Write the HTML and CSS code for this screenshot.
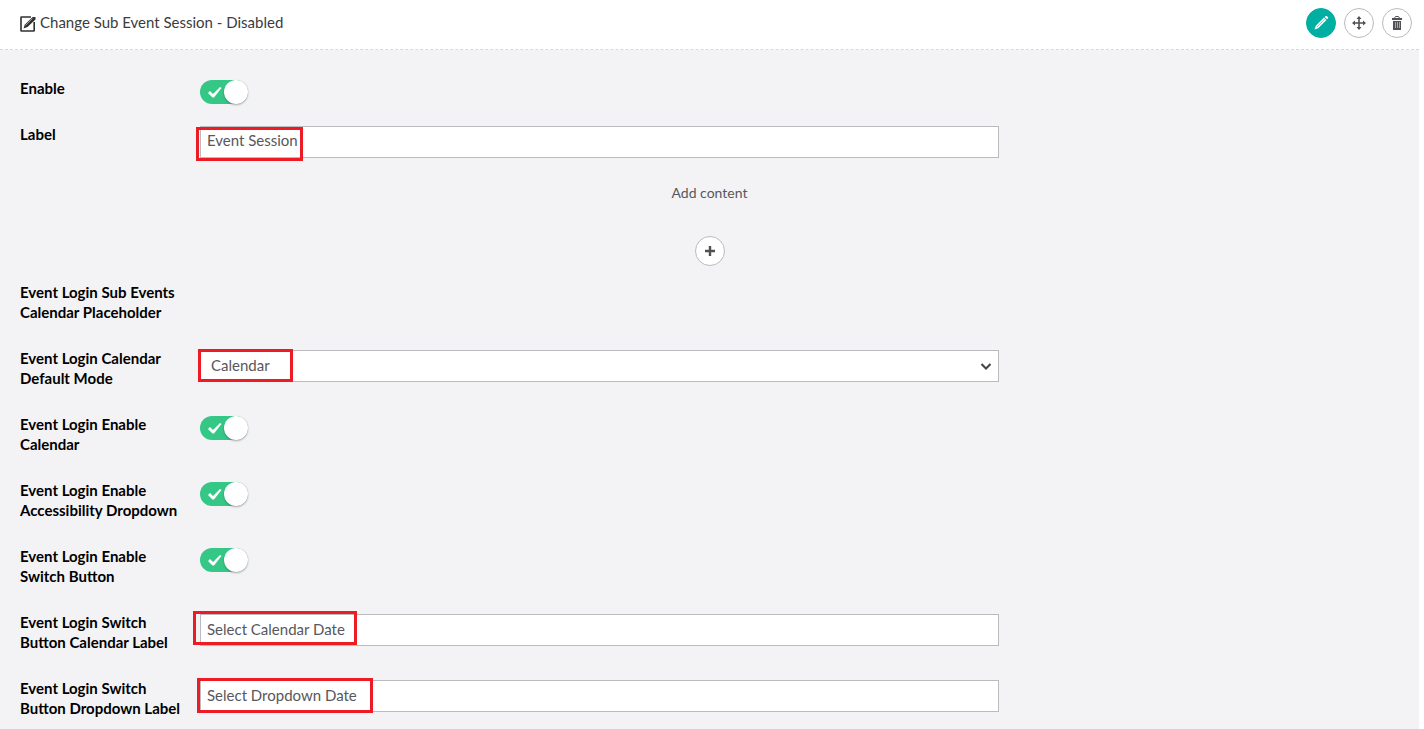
FILE: index.html
```
<!DOCTYPE html>
<html lang="en">
  <head>
    <meta charset="utf-8">
    <title>Change Sub Event Session</title>
    <link rel="stylesheet" href="styles.css">
  </head>
  <body>

    <div class="header">
      <svg class="icon-edit" width="16" height="16" viewBox="0 0 16 16">
        <path d="M11 1H1.500Q1 1 1 1.500V14.500Q1 15 1.500 15H13.500Q14.200 15 14.200 14.500V6" fill="none" stroke="#303033" stroke-width="1.600"/>
        <path d="M3.500 12.500l1.200-3.700L12.700 1h2.800v2.500L7.500 11z" fill="#303033"/>
        <path d="M5.500 9.500l7-7" stroke="#fff" stroke-width="0.500"/>
      </svg>
      <h1>Change Sub Event Session - Disabled</h1>
      <div class="actions">
        <button class="round active" type="button" aria-label="Edit">
          <svg width="16" height="16" viewBox="0 0 16 16">
            <path d="M1.500 14.500l1.300-3.800L11 2.600l2.400 2.400L5.200 13.200zM11.700 2l1-.9q.6-.4 1.100 0l1.200 1.200q.4.500 0 1l-.9 1z" fill="#fff"/>
            <path d="M4 12l7.800-7.800" stroke="#00aea2" stroke-width="0.500"/>
          </svg>
        </button>
        <button class="round" type="button" aria-label="Move">
          <svg width="14" height="14" viewBox="0 0 14 14" fill="#515054">
            <path d="M6.200 2.500h1.600v3.700h3.700v1.600H7.800v3.700H6.200V7.800H2.500V6.200h3.700z"/>
            <path d="M7 0l2.500 3h-5zM7 14l2.500-3h-5zM0 7l3-2.500v5zM14 7l-3-2.500v5z"/>
          </svg>
        </button>
        <button class="round" type="button" aria-label="Delete">
          <svg width="14" height="14" viewBox="0 0 14 14">
            <path d="M2 2h10v2H2zM3 5h8v9H3z" fill="#515054"/>
            <path d="M4.500 2l1-1.500h3l1 1.500" fill="none" stroke="#515054"/>
            <path d="M5.500 6v6M7.500 6v6M9.500 6v6" stroke="#7fb0e4"/>
          </svg>
        </button>
      </div>
    </div>

    <form class="content">
      <div class="row">
        <label for="enable">Enable</label>
        <div class="field toggle">
          <input type="checkbox" id="enable" checked>
          <svg width="14" height="12" viewBox="0 0 14 12"><path d="M0 7l2-2 3 3 7-7 1.500 1L6 11.500H4.500z" fill="#fff"/></svg>
        </div>
      </div>

      <div class="row">
        <label for="label">Label</label>
        <div class="field">
          <input class="text raised" type="text" id="label" value="Event Session">
          <span class="mark mark-label"></span>
        </div>
      </div>

      <div class="add">
        <p>Add content</p>
        <button class="round" type="button" aria-label="Add content">
          <svg width="12" height="12" viewBox="0 0 12 12"><path d="M6 1v10M1 6h10" stroke="#515054" stroke-width="2.400"/></svg>
        </button>
      </div>

      <div class="row">
        <label>Event Login Sub Events Calendar Placeholder</label>
      </div>

      <div class="row">
        <label for="mode">Event Login Calendar Default Mode</label>
        <div class="field">
          <select class="text" id="mode">
            <option>Calendar</option>
            <option>Dropdown</option>
          </select>
          <svg class="chevron" width="10" height="7" viewBox="0 0 10 7"><path d="M0.500 1L5 5.500 9.500 1" fill="none" stroke="#454548" stroke-width="2"/></svg>
          <span class="mark mark-mode"></span>
        </div>
      </div>

      <div class="row">
        <label for="calendar">Event Login Enable Calendar</label>
        <div class="field toggle">
          <input type="checkbox" id="calendar" checked>
          <svg width="14" height="12" viewBox="0 0 14 12"><path d="M0 7l2-2 3 3 7-7 1.500 1L6 11.500H4.500z" fill="#fff"/></svg>
        </div>
      </div>

      <div class="row">
        <label for="accessibility">Event Login Enable Accessibility Dropdown</label>
        <div class="field toggle">
          <input type="checkbox" id="accessibility" checked>
          <svg width="14" height="12" viewBox="0 0 14 12"><path d="M0 7l2-2 3 3 7-7 1.500 1L6 11.500H4.500z" fill="#fff"/></svg>
        </div>
      </div>

      <div class="row">
        <label for="switch">Event Login Enable Switch Button</label>
        <div class="field toggle">
          <input type="checkbox" id="switch" checked>
          <svg width="14" height="12" viewBox="0 0 14 12"><path d="M0 7l2-2 3 3 7-7 1.500 1L6 11.500H4.500z" fill="#fff"/></svg>
        </div>
      </div>

      <div class="row">
        <label for="calendar-label">Event Login Switch Button Calendar Label</label>
        <div class="field">
          <input class="text" type="text" id="calendar-label" value="Select Calendar Date">
          <span class="mark mark-calendar"></span>
        </div>
      </div>

      <div class="row">
        <label for="dropdown-label">Event Login Switch Button Dropdown Label</label>
        <div class="field">
          <input class="text" type="text" id="dropdown-label" value="Select Dropdown Date">
          <span class="mark mark-dropdown"></span>
        </div>
      </div>
    </form>

  </body>
</html>
```
FILE: styles.css
```
* {
  box-sizing: border-box;
}

html {
  background: #fff;
}

body {
  min-height: 100vh;
  margin: 0 5px 0 0;
  background: #f3f3f5;
  font-family: Lato, "Liberation Sans", sans-serif;
  font-size: 15px;
  line-height: 20px;
  color: #58575b;
}

/* Title bar */
.header {
  display: flex;
  align-items: center;
  height: 50px;
  padding: 0 7px 4px 20px;
  background: #fff;
  border-bottom: 1px dashed #d8d7d9;
}

.icon-edit {
  margin-top: 2px;
}

.header h1 {
  margin: 0 0 2px 4px;
  font-size: 15px;
  font-weight: 400;
  color: #3b3b3e;
}

.actions {
  display: flex;
  gap: 8px;
  margin-left: auto;
}

.round {
  display: flex;
  align-items: center;
  justify-content: center;
  width: 30px;
  height: 30px;
  padding: 0;
  border: 1px solid #bbbabf;
  border-radius: 50%;
  background: #fff;
}

.round.active {
  border-color: #00aea2;
  background: #00aea2;
}

/* Form rows */
.content {
  padding: 28px 20px 0;
}

.row {
  display: flex;
  margin-bottom: 20px;
}

.row label {
  width: 180px;
  padding: 0 16px 6px 0;
  font-weight: 700;
  color: #000;
}

.field {
  position: relative;
  flex: 1;
  max-width: 799px;
  margin-top: 2px;
}

.text {
  display: block;
  width: 100%;
  height: 32px;
  padding: 0 6px 3px;
  border: 1px solid #bbbabf;
  border-radius: 0;
  background: #fff;
  font: inherit;
  color: #58575b;
  appearance: none;
}

.text.raised {
  padding-bottom: 4px;
}

select.text {
  padding: 0 10px 2px;
}

.chevron {
  position: absolute;
  top: 13px;
  right: 8px;
}

/* Toggles */
.toggle input {
  display: block;
  width: 48px;
  height: 24px;
  margin: 0;
  border-radius: 12px;
  background: #35c786;
  appearance: none;
}

.toggle input::after {
  content: "";
  display: block;
  width: 24px;
  height: 24px;
  margin-left: auto;
  border-radius: 50%;
  background: #fff;
  box-shadow: 0 1px 2px rgba(0, 0, 0, 0.3);
}

.toggle svg {
  position: absolute;
  top: 6px;
  left: 8px;
  pointer-events: none;
}

.add {
  display: flex;
  flex-direction: column;
  align-items: center;
  gap: 33px;
  margin-bottom: 16px;
  padding-top: 5px;
  font-size: 14px;
}

.add p {
  margin: 0;
}

/* Red boxes round the values to set */
.mark {
  position: absolute;
  border: 3px solid #ed1c24;
  pointer-events: none;
}

.mark-label {
  top: 1px;
  left: -4px;
  width: 107px;
  height: 34px;
}

.mark-mode {
  top: -1px;
  left: -2px;
  width: 95px;
  height: 33px;
}

.mark-calendar {
  top: -3px;
  left: -7px;
  width: 164px;
  height: 34px;
}

.mark-dropdown {
  top: -2px;
  left: -3px;
  width: 176px;
  height: 35px;
}
```
